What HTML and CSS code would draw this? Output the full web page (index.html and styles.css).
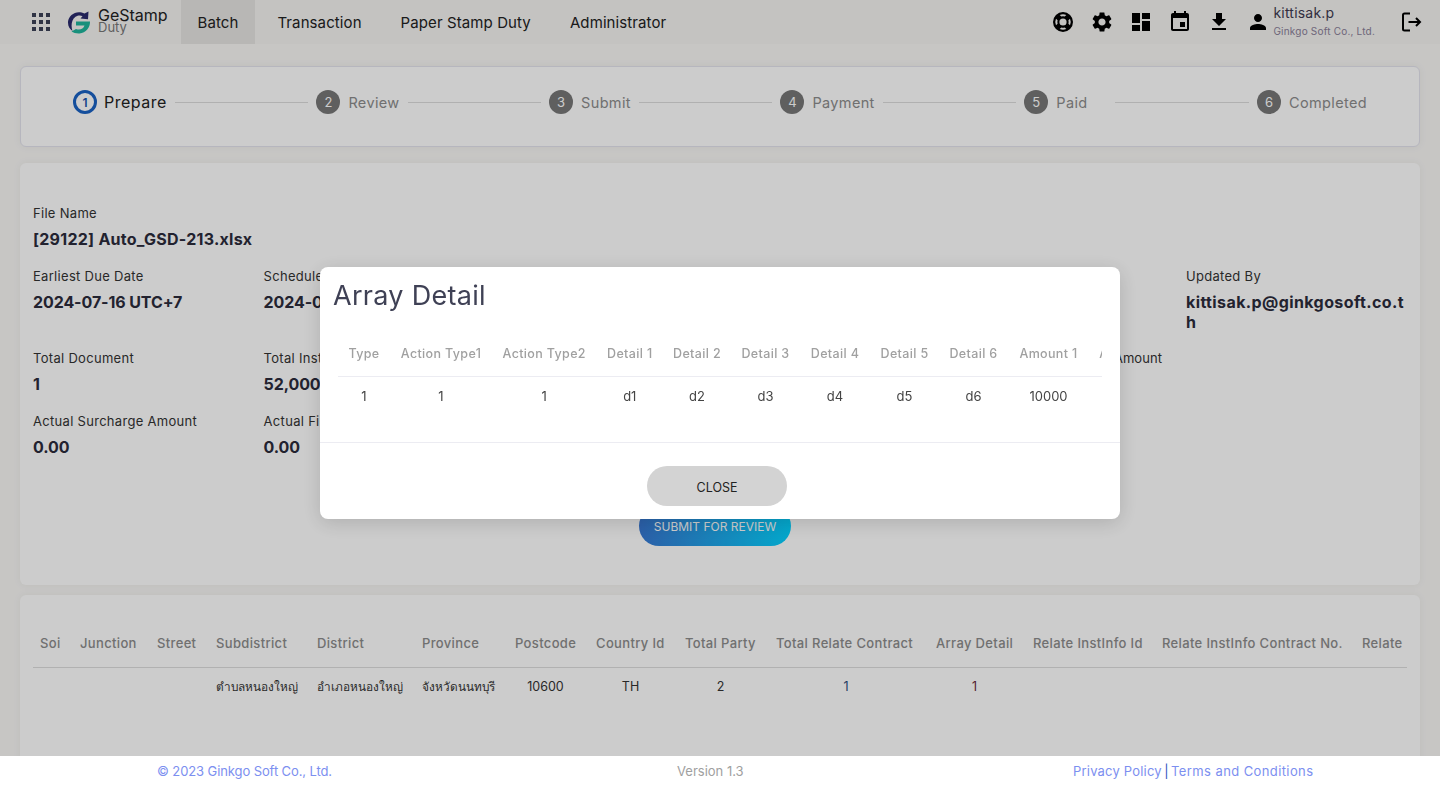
FILE: index.html
```html
<!DOCTYPE html>
<html>
<head>
    <meta charset="UTF-8"/>
    <title>GeStamp Duty - Batch</title>
    <link rel="stylesheet" href="styles.css">
</head>
<body>
<div class="page">
    <!-- Header -->
    <div class="header">
        <svg class="apps-icon" viewBox="0 0 18 18" width="18" height="18">
            <path d="M0 0h4v4H0zM7 0h4v4H7zM14 0h4v4h-4zM0 7h4v4H0zM7 7h4v4H7zM14 7h4v4h-4zM0 14h4v4H0zM7 14h4v4H7zM14 14h4v4h-4z"/>
        </svg>
        <div class="logo">
            <svg viewBox="0 0 24 24" width="24" height="24">
                <path class="logo-navy" d="M17.5 3.6 C10 -0.5 1.5 4.5 1 12 C.8 16.5 3 19.5 5.5 21 C4 17 4 10 8.5 6.8 C11.5 4.8 14 5.3 15.5 6.3 L13.5 8.5 L21 9.2 L21.5 1.5 Z"/>
                <path class="logo-teal" d="M9 11.5 H23 C23.3 17.5 19 23 12.5 23.4 C9.5 23.6 6.5 22.8 4.5 21.5 L9 19 C12.5 20.5 16.5 19 17.5 15.5 H9 Z"/>
            </svg>
            <div class="logo-text">
                <span class="logo-name">GeStamp</span>
                <span class="logo-sub">Duty</span>
            </div>
        </div>
        <div class="nav">
            <div class="nav-item active">Batch</div>
            <div class="nav-item">Transaction</div>
            <div class="nav-item">Paper Stamp Duty</div>
            <div class="nav-item">Administrator</div>
        </div>
        <div class="header-right">
            <svg class="top-icon" viewBox="0 0 24 24" width="24" height="24">
                <path fill-rule="evenodd" d="M12 2a10 10 0 1 0 0 20 10 10 0 0 0 0-20zm0 2.2c1.2 0 2.3.3 3.3.8l-1.6 1.6a5.8 5.8 0 0 0-3.4 0L8.700 5c1-.5 2.100-.8 3.300-.8zM5 15.300a7.800 7.800 0 0 1 0-6.600l1.600 1.600a5.800 5.800 0 0 0 0 3.400L5 15.300zm7 4.500c-1.200 0-2.300-.3-3.300-.8l1.600-1.600a5.800 5.800 0 0 0 3.400 0l1.600 1.600c-1 .5-2.100.8-3.300.8zm0-4.200a3.600 3.600 0 1 1 0-7.200 3.600 3.600 0 0 1 0 7.200zm7-.3-1.600-1.600a5.800 5.800 0 0 0 0-3.400L19 8.700a7.800 7.800 0 0 1 0 6.600z"/>
            </svg>
            <svg class="top-icon" viewBox="0 0 24 24" width="24" height="24">
                <path d="M19.14 12.94c.04-.3.06-.61.06-.94 0-.32-.02-.64-.07-.94l2.03-1.58c.18-.14.23-.41.12-.61l-1.92-3.32c-.12-.22-.37-.29-.59-.22l-2.39.96c-.5-.38-1.03-.7-1.62-.94l-.36-2.54c-.04-.24-.24-.41-.48-.41h-3.84c-.24 0-.43.17-.47.41l-.36 2.54c-.59.24-1.13.57-1.62.94l-2.39-.96c-.22-.08-.47 0-.59.22L2.74 8.87c-.12.21-.08.47.12.61l2.03 1.58c-.05.3-.09.63-.09.94s.02.64.07.94l-2.03 1.58c-.18.14-.23.41-.12.61l1.92 3.32c.12.22.37.29.59.22l2.39-.96c.5.38 1.03.7 1.62.94l.36 2.54c.05.24.24.41.48.41h3.84c.24 0 .44-.17.47-.41l.36-2.54c.59-.24 1.13-.56 1.62-.94l2.39.96c.22.08.47 0 .59-.22l1.92-3.32c.12-.22.07-.47-.12-.61l-2.01-1.58zM12 15.6c-1.98 0-3.6-1.62-3.6-3.6s1.62-3.6 3.6-3.6 3.6 1.62 3.6 3.6-1.62 3.6-3.6 3.6z"/>
            </svg>
            <svg class="top-icon" viewBox="0 0 24 24" width="24" height="24">
                <path d="M3 13h8V3H3v10zm0 8h8v-6H3v6zm10 0h8V11h-8v10zm0-18v6h8V3h-8z"/>
            </svg>
            <svg class="top-icon" viewBox="0 0 24 24" width="24" height="24">
                <path d="M17 12h-5v5h5v-5zM16 1v2H8V1H6v2H5c-1.110 0-1.990.9-1.990 2L3 19c0 1.100.89 2 2 2h14c1.100 0 2-.9 2-2V5c0-1.100-.9-2-2-2h-1V1h-2zm3 18H5V8h14v11z"/>
            </svg>
            <svg class="top-icon" viewBox="0 0 24 24" width="24" height="24">
                <path d="M19 9h-4V3H9v6H5l7 7 7-7zM5 18v2h14v-2H5z"/>
            </svg>
            <div class="user">
                <svg class="top-icon" viewBox="0 0 24 24" width="24" height="24">
                    <path d="M12 12c2.210 0 4-1.790 4-4s-1.790-4-4-4-4 1.790-4 4 1.790 4 4 4zm0 2c-2.670 0-8 1.340-8 4v2h16v-2c0-2.660-5.330-4-8-4z"/>
                </svg>
                <div class="user-text">
                    <span class="user-name">kittisak.p</span>
                    <span class="user-org">Ginkgo Soft Co., Ltd.</span>
                </div>
            </div>
            <svg class="top-icon logout" viewBox="0 0 24 24" width="24" height="24">
                <path class="logout-line" d="M11 3.500H5.500a1.500 1.500 0 0 0-1.500 1.500v14a1.500 1.500 0 0 0 1.500 1.500H11M9.500 12H21M17 8l4 4-4 4"/>
            </svg>
        </div>
    </div>

    <div class="content">
        <!-- Stepper -->
        <div class="card stepper">
            <div class="step current"><span class="step-num">1</span><span class="step-label">Prepare</span></div>
            <div class="step-line"></div>
            <div class="step"><span class="step-num">2</span><span class="step-label">Review</span></div>
            <div class="step-line"></div>
            <div class="step"><span class="step-num">3</span><span class="step-label">Submit</span></div>
            <div class="step-line"></div>
            <div class="step"><span class="step-num">4</span><span class="step-label">Payment</span></div>
            <div class="step-line"></div>
            <div class="step step-paid"><span class="step-num">5</span><span class="step-label">Paid</span></div>
            <div class="step-line"></div>
            <div class="step"><span class="step-num">6</span><span class="step-label">Completed</span></div>
        </div>

        <!-- Batch details -->
        <div class="card details">
            <div class="field file-name">
                <label>File Name</label>
                <div>[29122] Auto_GSD-213.xlsx</div>
            </div>
            <div class="field-grid">
                <div class="field row-one">
                    <label>Earliest Due Date</label>
                    <div>2024-07-16 UTC+7</div>
                </div>
                <div class="field row-one">
                    <label>Schedule Date</label>
                    <div>2024-07-16</div>
                </div>
                <div class="field row-one updated-by">
                    <label>Updated By</label>
                    <div>kittisak.p@ginkgosoft.co.th</div>
                </div>
                <div class="field row-two">
                    <label>Total Document</label>
                    <div>1</div>
                </div>
                <div class="field row-two">
                    <label>Total Instrument</label>
                    <div>52,000.00</div>
                </div>
                <div class="field row-two hidden-amount">
                    <label>Estimated Surcharge Fee Amount</label>
                </div>
                <div class="field row-three">
                    <label>Actual Surcharge Amount</label>
                    <div>0.00</div>
                </div>
                <div class="field row-three">
                    <label>Actual Fine Amount</label>
                    <div>0.00</div>
                </div>
            </div>
            <div class="submit-row">
                <div class="submit-btn">SUBMIT FOR REVIEW</div>
            </div>
        </div>

        <!-- Instrument table -->
        <div class="card list">
            <table class="list-table">
                <colgroup>
                    <col><col><col><col><col><col><col><col><col><col><col><col><col><col>
                </colgroup>
                <thead>
                <tr>
                    <th>Soi</th><th>Junction</th><th>Street</th><th>Subdistrict</th><th>District</th><th>Province</th><th>Postcode</th><th>Country Id</th><th>Total Party</th><th>Total Relate Contract</th><th>Array Detail</th><th>Relate InstInfo Id</th><th>Relate InstInfo Contract No.</th><th>Relate</th>
                </tr>
                </thead>
                <tbody>
                <tr>
                    <td></td><td></td><td></td><td class="left">ตำบลหนองใหญ่</td><td class="left">อำเภอหนองใหญ่</td><td class="left">จังหวัดนนทบุรี</td><td>10600</td><td>TH</td><td>2</td><td class="link">1</td><td class="link-red">1</td><td></td><td></td><td></td>
                </tr>
                </tbody>
            </table>
        </div>
    </div>

    <!-- Footer sits above the backdrop -->
    <div class="footer">
        <span class="copy">© 2023 Ginkgo Soft Co., Ltd.</span>
        <span class="version">Version 1.3</span>
        <span class="links">Privacy Policy <b>|</b> <span class="terms">Terms and Conditions</span></span>
    </div>
</div>

<!-- Array detail dialog -->
<div class="backdrop">
    <div class="modal">
        <div class="modal-title">Array Detail</div>
        <div class="modal-table-wrap">
            <table class="modal-table">
                <colgroup>
                    <col><col><col><col><col><col><col><col><col><col><col>
                </colgroup>
                <thead>
                <tr>
                    <th>Type</th><th>Action Type1</th><th>Action Type2</th><th>Detail 1</th><th>Detail 2</th><th>Detail 3</th><th>Detail 4</th><th>Detail 5</th><th>Detail 6</th><th>Amount 1</th><th>Amount 2</th>
                </tr>
                </thead>
                <tbody>
                <tr>
                    <td>1</td><td>1</td><td>1</td><td>d1</td><td>d2</td><td>d3</td><td>d4</td><td>d5</td><td>d6</td><td>10000</td><td></td>
                </tr>
                </tbody>
            </table>
        </div>
        <div class="modal-actions">
            <div class="close-btn">CLOSE</div>
        </div>
    </div>
</div>
</body>
</html>
```

FILE: styles.css
```css
* {
    box-sizing: border-box;
}
body {
    font-family: Inter, "Noto Sans", sans-serif;
    margin: 0;
    height: 786px;
    overflow: hidden;
    background-color: #f9f8f6;
    color: #2f2f3f;
}
.page {
    display: flex;
    flex-direction: column;
    height: 100%;
}

/* Header */
.header {
    display: flex;
    align-items: center;
    height: 44px;
    flex-shrink: 0;
    background-color: #f5f4f2;
    padding-left: 32px;
}
.apps-icon {
    fill: #3c4257;
    flex-shrink: 0;
}
.logo {
    display: flex;
    align-items: center;
    margin-left: 17px;
    width: 114px;
}
.logo-navy {
    fill: #2a2a6c;
}
.logo-teal {
    fill: #1fb59b;
}
.logo-text {
    display: flex;
    flex-direction: column;
    margin: 0 0 3px 7px;
    color: #222;
}
.logo-name {
    font-size: 16px;
    line-height: 15px;
}
.logo-sub {
    margin-top: -1px;
    font-size: 13px;
    line-height: 11px;
    color: #777;
}
.nav {
    display: flex;
    height: 100%;
}
.nav-item {
    display: flex;
    align-items: center;
    padding: 0 16.500px;
    margin-right: 6px;
    font-size: 15px;
    letter-spacing: 0.1px;
    color: #222;
}
.nav-item.active {
    background-color: #e6e5e3;
}
.header-right {
    display: flex;
    align-items: center;
    margin-left: auto;
    gap: 15px;
    padding-right: 17px;
}
.top-icon {
    fill: #000;
    flex-shrink: 0;
}
.user {
    display: flex;
    align-items: center;
    gap: 3px;
}
.user-text {
    display: flex;
    flex-direction: column;
}
.user-name {
    font-size: 14px;
    line-height: 18px;
    letter-spacing: 0.2px;
    color: #3e3a50;
}
.user-org {
    font-size: 10px;
    line-height: 18px;
    letter-spacing: 0.2px;
    color: #8a7f98;
}
.logout {
    margin-left: 9px;
}
.logout-line {
    fill: none;
    stroke: #000;
    stroke-width: 2;
}

/* Main area */
.content {
    flex: 1;
    overflow: hidden;
    padding: 22px 20px 0;
}
.card {
    background-color: #fff;
    border-radius: 6px;
    box-shadow: 0 0 8px rgba(0, 0, 0, 0.05);
}

/* Stepper */
.stepper {
    display: flex;
    align-items: flex-start;
    height: 81px;
    padding: 23px 52px 0;
    border: 1px solid #e4e4ee;
}
.step {
    display: flex;
    align-items: center;
    height: 24px;
}
.step-num {
    width: 24px;
    height: 24px;
    border-radius: 50%;
    background-color: #777;
    color: #fff;
    font-size: 13px;
    display: flex;
    align-items: center;
    justify-content: center;
}
.step-label {
    margin-left: 8px;
    font-size: 14.500px;
    letter-spacing: 0.35px;
    color: #8c8c8c;
}
.step.current .step-num {
    background-color: #fff;
    border: 3px solid #1a62c4;
    color: #1a56ad;
    font-size: 12px;
    font-weight: 600;
}
.step.current .step-label {
    margin-left: 7px;
    font-size: 16px;
    letter-spacing: 0.5px;
    color: #222;
}
.step-paid {
    margin-right: 20px;
}
.step-line {
    flex: 1;
    height: 1px;
    background-color: #dcdcdc;
    margin: 12px 8px 0;
}

/* Batch details */
.details {
    margin-top: 16px;
    height: 422px;
    padding: 42px 13px 0;
    display: flex;
    flex-direction: column;
}
.field label {
    display: block;
    font-size: 13px;
    line-height: 16px;
    letter-spacing: 0.3px;
    color: #333;
}
.field div {
    margin-top: 8px;
    font-size: 16px;
    font-weight: 700;
    line-height: 20px;
    letter-spacing: -0.1px;
    color: #2b2b3b;
    word-break: break-all;
}
.file-name {
    height: 63px;
}
.file-name div {
    letter-spacing: 0.25px;
}
.updated-by div {
    letter-spacing: 0.4px;
}
.field-grid {
    display: grid;
    grid-template-columns: repeat(6, 230.600px);
    grid-template-rows: 82px 63px 63px;
}
.row-one {
    grid-row: 1;
}
.row-two {
    grid-row: 2;
}
.row-three {
    grid-row: 3;
}
.updated-by {
    grid-column: 6;
    padding-right: 10px;
}
.hidden-amount {
    grid-column: 5;
}
.hidden-amount label {
    letter-spacing: 0.06px;
}
.submit-row {
    display: flex;
    justify-content: center;
    margin-top: 30px;
    padding-right: 10px;
}
.submit-btn {
    width: 152px;
    height: 40px;
    border-radius: 20px;
    background-image: linear-gradient(90deg, #3777d2, #05d2ff);
    color: #fff;
    font-size: 12px;
    display: flex;
    align-items: center;
    justify-content: center;
}

/* Instrument table */
.list {
    margin-top: 10px;
    height: 200px;
    padding: 30px 13px 0;
}
.list-table {
    table-layout: fixed;
    width: 1374px;
    border-collapse: collapse;
}
.list-table col:nth-child(1) { width: 40px; }
.list-table col:nth-child(2) { width: 77px; }
.list-table col:nth-child(3) { width: 59px; }
.list-table col:nth-child(4) { width: 101px; }
.list-table col:nth-child(5) { width: 105px; }
.list-table col:nth-child(6) { width: 93px; }
.list-table col:nth-child(7) { width: 81px; }
.list-table col:nth-child(8) { width: 89px; }
.list-table col:nth-child(9) { width: 91px; }
.list-table col:nth-child(10) { width: 160px; }
.list-table col:nth-child(11) { width: 97px; }
.list-table col:nth-child(12) { width: 129px; }
.list-table col:nth-child(13) { width: 200px; }
.list-table col:nth-child(14) { width: 52px; }
.list-table th {
    height: 42px;
    padding: 0 0 5px 7px;
    font-size: 13px;
    font-weight: 500;
    letter-spacing: 0.35px;
    color: #8c8c8c;
    text-align: left;
    white-space: nowrap;
    overflow: hidden;
    border-bottom: 1px solid #dedede;
}
.list-table td {
    height: 38px;
    padding: 0 13px 0 7px;
    font-size: 12.500px;
    text-align: center;
    color: #333;
    white-space: nowrap;
    overflow: hidden;
}
.list-table td.left {
    font-size: 11.800px;
    text-align: left;
    padding-right: 0;
}
.list-table td.link {
    color: #2b4a7a;
}
.list-table td.link-red {
    color: #6a2a3a;
}

/* Footer */
.footer {
    position: relative;
    z-index: 2;
    display: flex;
    align-items: center;
    height: 30px;
    flex-shrink: 0;
    background-color: #fff;
    font-size: 13px;
    color: #a0a0a0;
}
.copy {
    width: 677px;
    padding-left: 157px;
    letter-spacing: -0.1px;
    color: #7c8ff0;
}
.version {
    width: 396px;
}
.links {
    letter-spacing: 0.2px;
    color: #7c8ff0;
}
.links b {
    margin: 0 -1.500px;
    color: #2f55c0;
    font-weight: 400;
}
.terms {
    letter-spacing: 0.4px;
}

/* Dialog */
.backdrop {
    position: fixed;
    inset: 0;
    z-index: 1;
    background-color: rgba(0, 0, 0, 0.2);
}
.modal {
    position: absolute;
    left: 320px;
    top: 267px;
    width: 800px;
    height: 252px;
    background-color: #fff;
    border-radius: 8px;
    box-shadow: 0 4px 20px rgba(0, 0, 0, 0.15);
}
.modal-title {
    padding: 11px 13px 0;
    font-size: 27px;
    line-height: 36px;
    letter-spacing: 0.3px;
    color: #3f4155;
}
.modal-table-wrap {
    margin: 18px 18px 0;
    overflow: hidden;
    height: 110px;
}
.modal-table {
    table-layout: fixed;
    width: 832px;
    border-collapse: collapse;
}
.modal-table col:nth-child(1) { width: 52px; }
.modal-table col:nth-child(2) { width: 102px; }
.modal-table col:nth-child(3) { width: 104.500px; }
.modal-table col:nth-child(4) { width: 66.500px; }
.modal-table col:nth-child(5) { width: 68px; }
.modal-table col:nth-child(6) { width: 69px; }
.modal-table col:nth-child(7) { width: 70px; }
.modal-table col:nth-child(8) { width: 69px; }
.modal-table col:nth-child(9) { width: 69px; }
.modal-table col:nth-child(10) { width: 81px; }
.modal-table col:nth-child(11) { width: 81px; }
.modal-table th {
    height: 44px;
    padding: 0;
    font-size: 12.500px;
    font-weight: 500;
    letter-spacing: 0.35px;
    color: #a0a0a0;
    text-align: center;
    white-space: nowrap;
    overflow: hidden;
    border-bottom: 1px solid #ececf2;
}
.modal-table td {
    height: 40px;
    font-size: 13px;
    text-align: center;
    color: #444;
}
.modal-actions {
    display: flex;
    justify-content: center;
    align-items: flex-start;
    height: 77px;
    padding: 23px 6px 0 0;
    border-top: 1px solid #ececf2;
}
.close-btn {
    width: 140px;
    height: 40px;
    padding-top: 2px;
    border-radius: 20px;
    background-color: #d3d3d3;
    color: #222;
    font-size: 12.500px;
    display: flex;
    align-items: center;
    justify-content: center;
}
```
